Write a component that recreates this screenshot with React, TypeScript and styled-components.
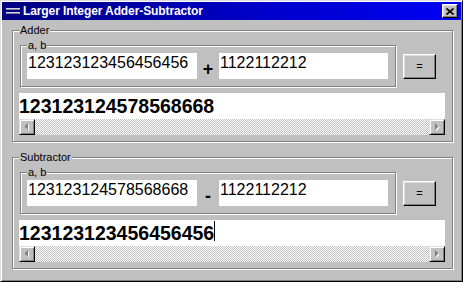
import React from "react";
import styled, { createGlobalStyle } from "styled-components";

const Global = createGlobalStyle`
  html, body { margin: 0; padding: 0; background: #c0c0c0; }
  body { font-family: "Liberation Sans", Arial, sans-serif; color: #000; }
  * { box-sizing: border-box; }
`;

const Window = styled.div`
  width: 463px;
  height: 282px;
  background: #c0c0c0;
  border: 1px solid;
  border-color: #dfdfdf #000 #000 #dfdfdf;
  box-shadow: inset 1px 1px #fff, inset -1px -1px #808080;
  padding: 1px;
  display: flex;
  flex-direction: column;
  overflow: hidden;
`;

const TitleBar = styled.div`
  height: 18px;
  flex-shrink: 0;
  display: flex;
  align-items: center;
  padding: 0 3px 0 4px;
  background: linear-gradient(90deg, #000080 0%, #0000c8 55%, #0000f4 100%);
  color: #fff;
  font: bold 12px "Liberation Sans", Arial, sans-serif;
`;

const TitleIcon = styled.svg`
  width: 14px;
  height: 9px;
  margin-right: 3px;
  flex-shrink: 0;
`;

const TitleText = styled.span`
  white-space: nowrap;
  letter-spacing: -0.1px;
`;

const CloseButton = styled.div`
  margin-left: auto;
  width: 16px;
  height: 14px;
  background: #c0c0c0;
  border: 1px solid;
  border-color: #fff #000 #000 #fff;
  box-shadow: inset -1px -1px #808080, inset 1px 1px #dfdfdf;
  display: flex;
  align-items: center;
  justify-content: center;
`;

const Group = styled.div<{ $top: number }>`
  position: relative;
  flex-shrink: 0;
  height: 112px;
  margin: ${(p) => p.$top}px 8px 0 10px;
  border: 1px solid #808080;
  box-shadow: inset 1px 1px #fff, 1px 1px #fff;
  padding: 14px 7px 6px 7px;
  display: flex;
  flex-direction: column;
  gap: 6px;
`;

const Legend = styled.span<{ $left: number }>`
  position: absolute;
  top: -7px;
  left: ${(p) => p.$left}px;
  padding: 0 1px;
  background: #c0c0c0;
  font: 11px/12px "Liberation Sans", Arial, sans-serif;
  white-space: nowrap;
`;

const Row = styled.div`
  display: flex;
  align-items: center;
  gap: 7px;
`;

const InnerGroup = styled.div`
  position: relative;
  width: 376px;
  height: 42px;
  border: 1px solid #808080;
  box-shadow: inset 1px 1px #fff, 1px 1px #fff;
  padding: 7px 7px 7px 6px;
  display: flex;
  align-items: stretch;
`;

const NumberInput = styled.input<{ $w: number }>`
  width: ${(p) => p.$w}px;
  height: 26px;
  border: none;
  outline: none;
  margin: 0;
  background: #fff;
  padding: 1px 2px 7px 1px;
  font: 16px "Liberation Sans", Arial, sans-serif;
  color: #000;
`;

const Sign = styled.span`
  width: 22px;
  display: flex;
  align-items: center;
  justify-content: center;
  padding-top: 6px;
  font: bold 18px/18px "Liberation Sans", Arial, sans-serif;
`;

const EqualsButton = styled.button`
  width: 33px;
  height: 25px;
  padding: 0;
  margin: 0;
  background: #c0c0c0;
  border: 1px solid;
  border-color: #fff #000 #000 #fff;
  box-shadow: inset -1px -1px #808080, inset 1px 1px #dfdfdf;
  font: 11px "Liberation Sans", Arial, sans-serif;
  color: #000;
`;

const ResultBox = styled.div`
  margin-left: -1px;
  display: flex;
  flex-direction: column;
`;

const ResultText = styled.div`
  height: 26px;
  background: #fff;
  padding: 2px 0 0 0;
  font: bold 19.5px/22px "Liberation Sans", Arial, sans-serif;
  white-space: nowrap;
  overflow: hidden;
`;

const Caret = styled.span`
  display: inline-block;
  width: 1px;
  height: 20px;
  background: #000;
  vertical-align: top;
  margin-top: -1px;
`;

const ScrollBar = styled.div`
  height: 16px;
  display: flex;
`;

const ScrollButton = styled.div`
  width: 16px;
  height: 16px;
  flex-shrink: 0;
  background: #c0c0c0;
  border: 1px solid;
  border-color: #dfdfdf #000 #000 #dfdfdf;
  box-shadow: inset 1px 1px #fff, inset -1px -1px #808080;
  display: flex;
  align-items: center;
  justify-content: center;
`;

const ScrollTrack = styled.div`
  flex: 1;
  background: repeating-conic-gradient(#c0c0c0 0 25%, #fff 0 50%) 0 0 / 2px 2px;
`;

const Arrow = ({ dir }: { dir: "left" | "right" }) => {
  const pts = dir === "left" ? "5,0 5,7 1.5,3.5" : "2,0 2,7 5.5,3.5";
  return (
    <svg width="8" height="9" viewBox="0 0 8 9">
      <polygon points={pts} fill="#fff" transform="translate(1,1)" />
      <polygon points={pts} fill="#808080" />
    </svg>
  );
};

const Scroller = () => (
  <ScrollBar>
    <ScrollButton>
      <Arrow dir="left" />
    </ScrollButton>
    <ScrollTrack />
    <ScrollButton>
      <Arrow dir="right" />
    </ScrollButton>
  </ScrollBar>
);

type SectionProps = {
  title: string;
  top: number;
  a: string;
  b: string;
  op: string;
  result: string;
  caret?: boolean;
};

const Section = ({ title, top, a, b, op, result, caret }: SectionProps) => (
  <Group $top={top}>
    <Legend $left={6}>{title}</Legend>
    <Row>
      <InnerGroup>
        <Legend $left={6}>a, b</Legend>
        <NumberInput $w={170} defaultValue={a} />
        <Sign>{op}</Sign>
        <NumberInput $w={169} defaultValue={b} />
      </InnerGroup>
      <EqualsButton>=</EqualsButton>
    </Row>
    <ResultBox>
      <ResultText>
        {result}
        {caret && <Caret />}
      </ResultText>
      <Scroller />
    </ResultBox>
  </Group>
);

export default function App() {
  return (
    <>
      <Global />
      <Window>
        <TitleBar>
          <TitleIcon viewBox="0 0 14 9">
            <rect x="0" y="1" width="14" height="1" fill="#d8d8d8" />
            <rect x="0" y="2" width="14" height="1" fill="#8080a0" />
            <rect x="0" y="5" width="14" height="1" fill="#d8d8d8" />
            <rect x="0" y="6" width="14" height="1" fill="#8080a0" />
          </TitleIcon>
          <TitleText>Larger Integer Adder-Subtractor</TitleText>
          <CloseButton>
            <svg width="8" height="7" viewBox="0 0 8 7">
              <path d="M0.5 0.5 L7.5 6.5 M7.5 0.5 L0.5 6.5" stroke="#000" strokeWidth="1.6" />
            </svg>
          </CloseButton>
        </TitleBar>
        <Section
          title="Adder"
          top={10}
          a="123123123456456456"
          b="1122112212"
          op="+"
          result="123123124578568668"
        />
        <Section
          title="Subtractor"
          top={15}
          a="123123124578568668"
          b="1122112212"
          op="-"
          result="123123123456456456"
          caret
        />
      </Window>
    </>
  );
}
